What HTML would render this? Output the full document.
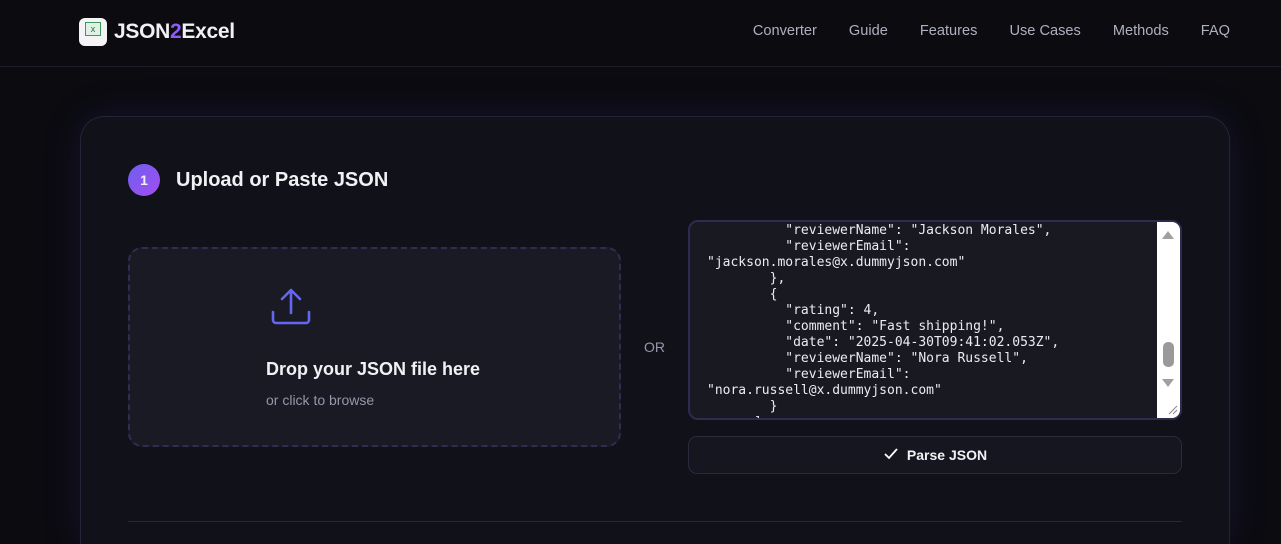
<!DOCTYPE html>
<html><head><meta charset="utf-8"><style>
*{box-sizing:border-box;margin:0;padding:0}
html,body{width:1281px;height:544px;overflow:hidden}
body{background:#0b0b10;font-family:"Liberation Sans",sans-serif;color:#f1f1f5;position:relative}
.hdr{position:absolute;left:0;top:0;width:1281px;height:67px;border-bottom:1px solid #1e1e2a;background:#0b0b10}
.logo{position:absolute;left:79px;top:18px;width:28px;height:28px;background:#f4f4f6;border-radius:6px}
.brand{position:absolute;left:114px;top:20px;font-size:21px;font-weight:bold;letter-spacing:-0.3px}
nav{position:absolute;top:23px;right:51px;display:flex;gap:32px;font-size:14.6px;color:#aeb0c0}
.card{position:absolute;left:80px;top:116px;width:1150px;height:428px;border-radius:24px 24px 0 0;background:#111119;border:1px solid #23233a;border-bottom:none;box-shadow:0 0 40px rgba(90,70,200,0.15)}
.num{position:absolute;left:128px;top:164px;width:32px;height:32px;border-radius:50%;background:linear-gradient(135deg,#6c5ff0,#a44ef0);font-size:14px;font-weight:bold;text-align:center;line-height:32px}
.ttl{position:absolute;left:176px;top:169px;font-size:20px;font-weight:bold}
.drop{position:absolute;left:128px;top:247px;width:493px;height:200px;border:2px dashed #2f2d55;border-radius:14px;background:#1a1a24}
.or{position:absolute;left:644px;top:339px;font-size:14px;color:#9597aa}
.ta{position:absolute;left:688px;top:220px;width:494px;height:200px;border:2px solid #2d2b50;border-radius:10px;background:#191922;overflow:hidden}
pre{position:absolute;left:17px;top:1px;font-family:"DejaVu Sans Mono","Liberation Mono",monospace;font-size:13px;line-height:16px;color:#ececf0}
.sb{position:absolute;right:0;top:0;width:23px;height:196px;background:#fff}
.btn{position:absolute;left:688px;top:436px;width:494px;height:38px;border:1px solid #2a2a3d;border-radius:9px;background:#161620;text-align:center;font-size:14px;font-weight:bold;line-height:36px}
.div{position:absolute;left:128px;top:521px;width:1054px;height:1px;background:#26264a}
</style></head><body>
<div class="hdr">
<div class="logo"><div style="position:absolute;left:6px;top:4px;width:16px;height:14px;border:1px solid #3b9a5c;background:#dff0e4;font-size:9px;color:#2a6d3f;text-align:center;line-height:12px">x</div></div>
<div class="brand">JSON<span style="color:#8b5cf6">2</span>Excel</div>
<nav><span>Converter</span><span>Guide</span><span>Features</span><span>Use Cases</span><span>Methods</span><span>FAQ</span></nav>
</div>
<div class="card"></div>
<div class="num">1</div>
<div class="ttl">Upload or Paste JSON</div>
<div class="drop">
<svg style="position:absolute;left:139px;top:37px" width="44" height="44" viewBox="0 0 44 44" fill="none" stroke="#6366f1" stroke-width="2.6" stroke-linecap="round" stroke-linejoin="round"><path d="M22 27V5M13 13l9-9 9 9M4 26v8a3 3 0 0 0 3 3h30a3 3 0 0 0 3-3v-8"/></svg>
<div style="position:absolute;left:136px;top:110px;font-size:18px;font-weight:bold">Drop your JSON file here</div>
<div style="position:absolute;left:136px;top:143px;font-size:14px;color:#9597aa">or click to browse</div>
</div>
<div class="or">OR</div>
<div class="ta"><pre>          "reviewerName": "Jackson Morales",
          "reviewerEmail":
"jackson.morales@x.dummyjson.com"
        },
        {
          "rating": 4,
          "comment": "Fast shipping!",
          "date": "2025-04-30T09:41:02.053Z",
          "reviewerName": "Nora Russell",
          "reviewerEmail":
"nora.russell@x.dummyjson.com"
        }
      ],</pre>
<div class="sb">
<svg width="23" height="196" viewBox="0 0 23 196"><path d="M5 17l6-8 6 8z" fill="#a0a0a0"/><rect x="6" y="120" width="11" height="25" rx="5" fill="#9a9a9a"/><path d="M5 157l6 8 6-8z" fill="#a0a0a0"/><path d="M12 192l8-8M16 192l4-4" stroke="#888" stroke-width="1"/></svg>
</div></div>
<div class="btn"><svg width="16" height="14" viewBox="0 0 16 14" style="vertical-align:-1px;margin-right:8px" fill="none" stroke="#fff" stroke-width="1.8"><path d="M2 7l4 4 8-9"/></svg>Parse JSON</div>
<div class="div"></div>
</body></html>
